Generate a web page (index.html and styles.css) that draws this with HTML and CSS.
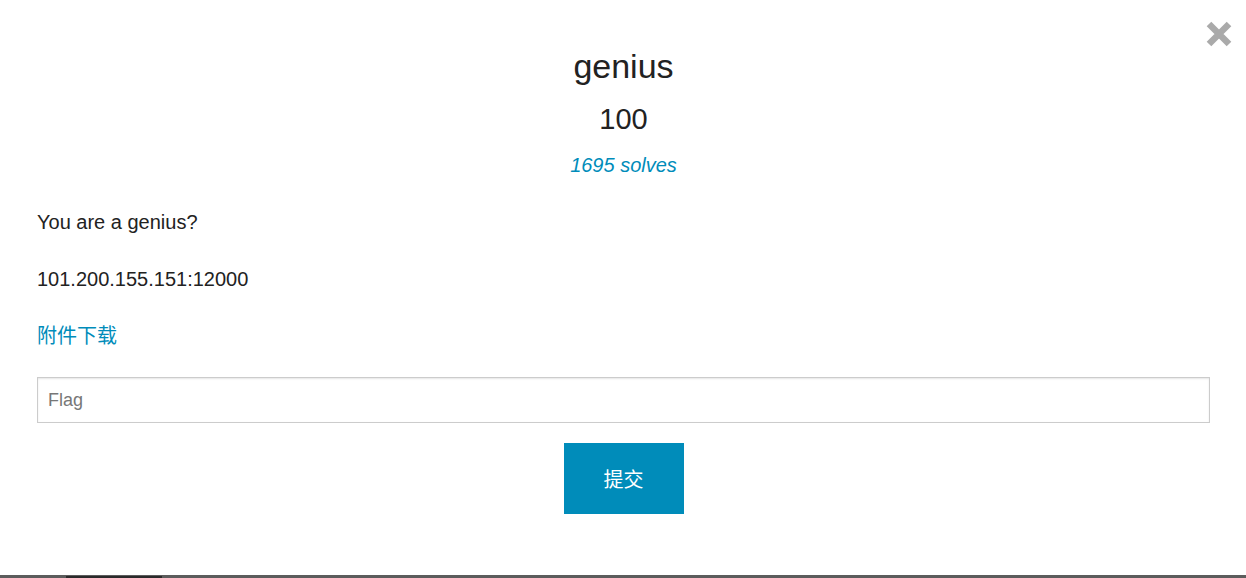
FILE: index.html
```html
<!DOCTYPE html>
<html lang="zh">
<head>
<meta charset="utf-8">
<title>genius</title>
<link rel="stylesheet" href="styles.css">
</head>
<body>
<div class="backdrop">
  <div class="modal">
    <a class="close" href="#" aria-label="Close">
      <svg width="26" height="26" viewBox="0 0 26 26"><path d="M3 3 L23 23 M23 3 L3 23" stroke="#aaaaaa" stroke-width="6.5" stroke-linecap="butt"/></svg>
    </a>
    <h2 class="title">genius</h2>
    <h3 class="points">100</h3>
    <p class="solves">1695 solves</p>
    <p class="desc">You are a genius?</p>
    <p class="desc">101.200.155.151:12000</p>
    <p class="desc"><a class="link" href="#">附件下载</a></p>
    <form class="flag-form">
      <input class="flag-input" type="text" placeholder="Flag">
      <div class="actions"><button class="submit" type="button">提交</button></div>
    </form>
  </div>
  <div class="behind"><span class="mark"></span></div>
</div>
</body>
</html>
```
FILE: styles.css
```css
html, body {
  margin: 0;
  padding: 0;
  height: 100%;
  overflow: hidden;
}
body {
  font-family: "Liberation Sans", Arial, "Noto Sans CJK SC", sans-serif;
  color: #222222;
  background: #5c5c5c;
}
.backdrop {
  height: 578px;
  display: flex;
  flex-direction: column;
  background: #5c5c5c;
}
.modal {
  position: relative;
  background: #ffffff;
  height: 575px;
  box-sizing: border-box;
  padding: 46px 36px 0 37px;
  flex: none;
}
.close {
  position: absolute;
  top: 21px;
  right: 14px;
  width: 26px;
  height: 26px;
  display: block;
  line-height: 0;
}
.title {
  margin: 0;
  text-align: center;
  font-weight: normal;
  font-size: 34px;
  line-height: 40px;
}
.points {
  margin: 16px 0 0;
  text-align: center;
  font-weight: normal;
  font-size: 29px;
  line-height: 34px;
}
.solves {
  margin: 17px 0 0;
  text-align: center;
  font-style: italic;
  font-size: 20px;
  line-height: 24px;
  color: #008cba;
}
.desc {
  margin: 33px 0 0;
  font-size: 20px;
  line-height: 24px;
}
.link {
  color: #008cba;
  text-decoration: none;
  font-family: "Liberation Sans", "Noto Sans CJK SC", sans-serif;
}
.flag-form {
  margin: 29px 0 0;
}
.flag-input {
  display: block;
  width: 100%;
  height: 46px;
  box-sizing: border-box;
  border: 1px solid #cccccc;
  box-shadow: inset 0 1px 2px rgba(0, 0, 0, 0.1);
  padding: 0 10px;
  font-family: "Liberation Sans", Arial, sans-serif;
  font-size: 18px;
  color: #222222;
  margin: 0;
  outline: none;
  background: #ffffff;
}
.flag-input::placeholder {
  color: #777777;
}
.actions {
  display: flex;
  justify-content: center;
  margin-top: 20px;
}
.submit {
  width: 120px;
  height: 71px;
  border: none;
  background: #008cba;
  color: #ffffff;
  font-family: "Liberation Sans", "Noto Sans CJK SC", sans-serif;
  font-size: 20px;
  padding: 0;
  cursor: pointer;
}
.behind {
  height: 3px;
  padding-left: 66px;
  display: flex;
  align-items: flex-end;
}
.mark {
  width: 96px;
  height: 2px;
  background: #2a2a2a;
}
```
